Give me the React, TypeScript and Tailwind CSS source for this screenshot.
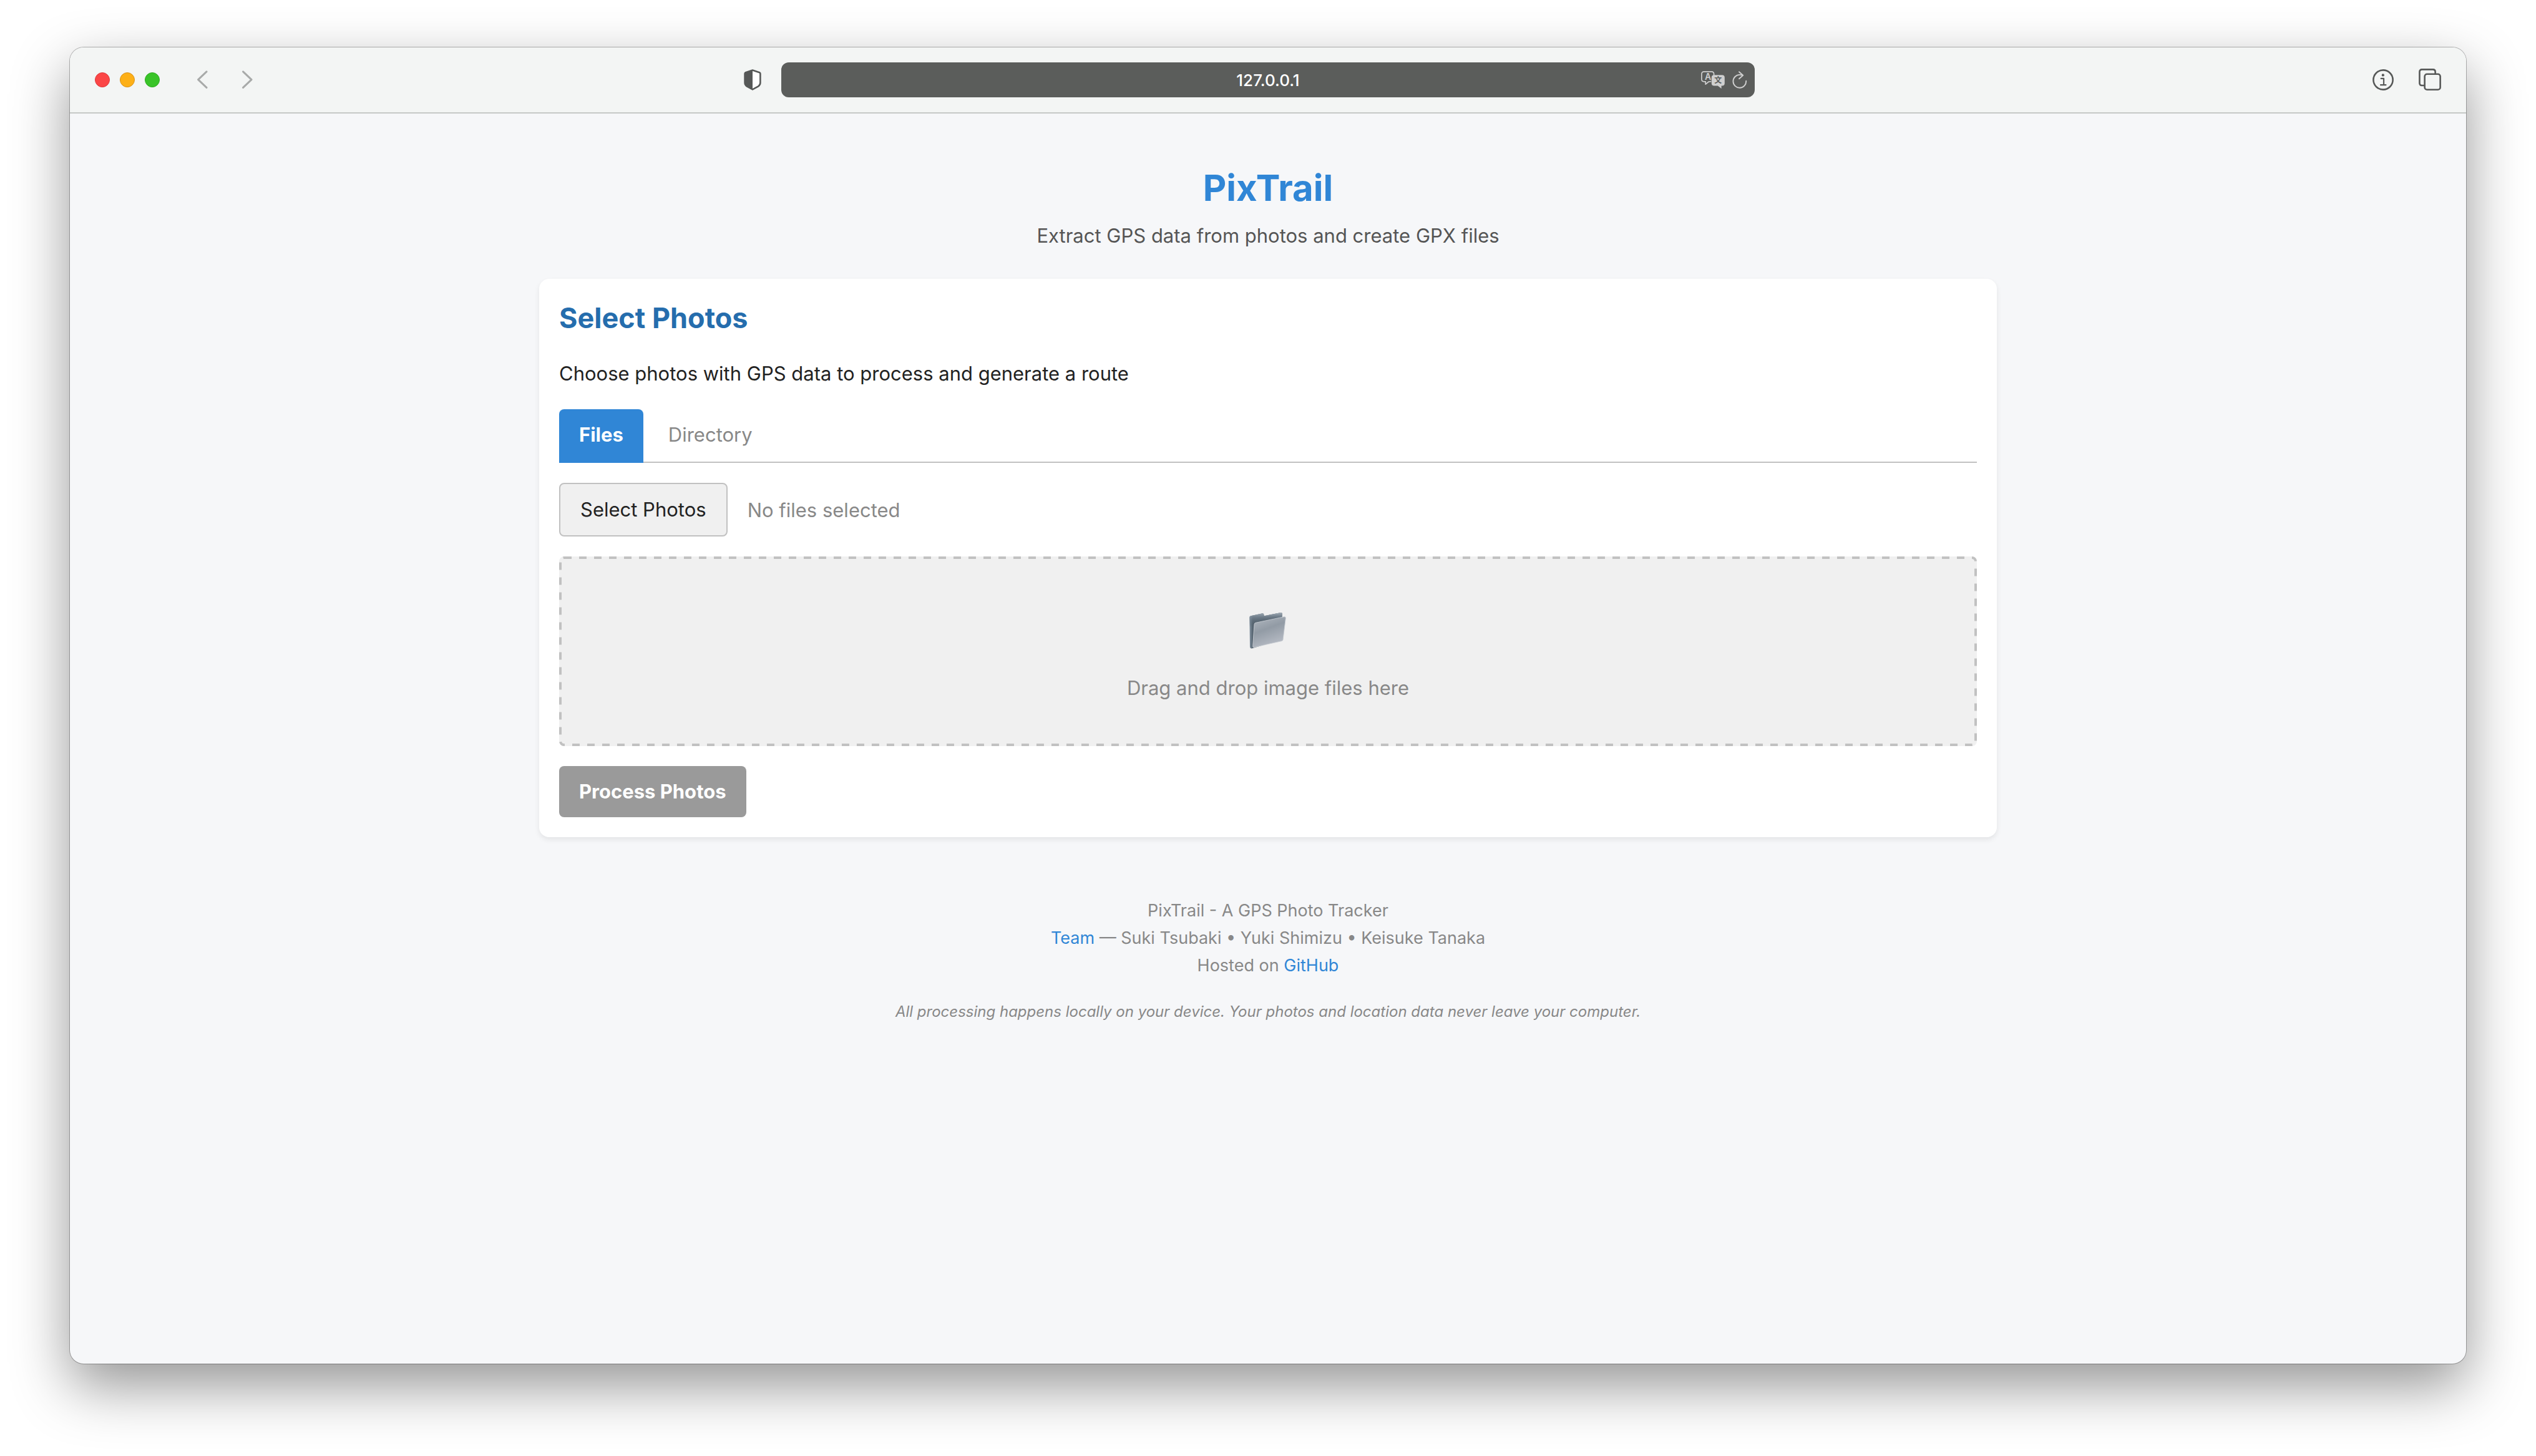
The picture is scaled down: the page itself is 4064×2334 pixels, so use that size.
import { useRef, useState } from 'react'

function ChevronIcon({ flip = false }: { flip?: boolean }) {
  return (
    <svg viewBox="0 0 18 30" className="h-[30px] w-[18px]" fill="none" stroke="#a8aaa9" strokeWidth="3" strokeLinecap="round" strokeLinejoin="round" aria-hidden="true">
      <path d={flip ? 'M2.6 1.8 16 14.6 2.6 27.4' : 'M16 1.8 2.6 14.6 16 27.4'} />
    </svg>
  )
}

function ShieldIcon() {
  return (
    <svg viewBox="0 0 28 34" className="h-[34px] w-7" aria-hidden="true">
      <path d="M14 1.6 25.2 5.3Q26.4 5.8 26.4 7v14.6Q26.4 25.2 23.2 27.3L14 32.4 4.8 27.3Q1.6 25.2 1.6 21.6V7Q1.6 5.8 2.8 5.3Z" fill="#fff" stroke="#565857" strokeWidth="2.6" strokeLinejoin="round" />
      <path d="M14 1.6V32.4L4.8 27.3Q1.6 25.2 1.6 21.6V7Q1.6 5.8 2.8 5.3Z" fill="#565857" />
    </svg>
  )
}

function TranslateIcon() {
  return (
    <svg viewBox="0 0 38 28" className="h-7 w-[38px]" aria-hidden="true">
      <path d="M15.5 16.6 12.2 17 7.2 21.2V16.8H5Q.9 16.8.9 12.8V4.8Q.9.9 5 .9H16.6Q20.6.9 20.6 4.8V6.4" fill="none" stroke="#cfcfcf" strokeWidth="1.7" strokeLinejoin="round" strokeLinecap="round" />
      <text x="11" y="13.8" fontSize="14" fontWeight="600" textAnchor="middle" fill="#cfcfcf" fontFamily="Inter, sans-serif">A</text>
      <path d="M21 6.2H33.6Q37.8 6.2 37.8 10.2V19.4Q37.8 23.4 33.6 23.4H32.6V28L26.8 23.4H21Q16.8 23.4 16.8 19.4V10.2Q16.8 6.2 21 6.2Z" fill="#cfcfcf" />
      <text x="27.3" y="19.2" fontSize="12" fontWeight="700" textAnchor="middle" fill="#5b5d5b" fontFamily="'Noto Sans CJK SC', sans-serif">文</text>
    </svg>
  )
}

function ReloadIcon() {
  return (
    <svg viewBox="0 0 24 28" className="h-7 w-6" fill="none" stroke="#cfcfcf" strokeWidth="1.9" strokeLinecap="round" strokeLinejoin="round" aria-hidden="true">
      <path d="M22.2 15.8A10.4 10.4 0 1 1 11.8 5.9Q14 5.9 16.4 6.6" />
      <path d="M11 1.2 17.2 6.8 11 12.2" />
    </svg>
  )
}

function InfoIcon() {
  return (
    <svg viewBox="0 0 34 34" className="size-[34px]" fill="none" stroke="#565857" aria-hidden="true">
      <circle cx="17" cy="17" r="15.6" strokeWidth="2.6" />
      <path d="M13.6 14.8H18V25.2M13 25.2H21.4" strokeWidth="2.2" strokeLinecap="round" strokeLinejoin="round" />
      <circle cx="16.8" cy="9.4" r="2.1" fill="#565857" stroke="none" />
    </svg>
  )
}

function TabsIcon() {
  return (
    <svg viewBox="0 0 36 36" className="size-9" fill="none" stroke="#565857" strokeWidth="2.6" aria-hidden="true">
      <path d="M9.6 27H5.2Q1.4 27 1.4 23.2V5.2Q1.4 1.4 5.2 1.4H22.8Q26.6 1.4 26.6 5.2V8.8" />
      <rect x="9.6" y="8.8" width="25" height="25" rx="3.8" />
    </svg>
  )
}

function FolderIcon() {
  return (
    <svg viewBox="180 117 186 186" className="size-[62px]" aria-hidden="true">
      <defs>
        <linearGradient id="folder-back" x1="0" y1="0" x2="1" y2="0">
          <stop offset="0" stopColor="#8594a2" />
          <stop offset="0.1" stopColor="#55636f" />
          <stop offset="1" stopColor="#3f4d59" />
        </linearGradient>
        <linearGradient id="folder-tab" x1="0" y1="0" x2="0" y2="1">
          <stop offset="0" stopColor="#a6b1bb" />
          <stop offset="0.14" stopColor="#7f8d9a" stopOpacity="0.6" />
          <stop offset="0.4" stopColor="#4b5965" stopOpacity="0" />
        </linearGradient>
        <linearGradient id="folder-front" x1="0.1" y1="0" x2="0.5" y2="1">
          <stop offset="0" stopColor="#b0b7bf" />
          <stop offset="0.45" stopColor="#929ba5" />
          <stop offset="1" stopColor="#b7bcc5" />
        </linearGradient>
      </defs>
      <path d="M184 146Q184 140 190 139L246 127Q252 126 253 132L254 139 335 123Q341 122 341 128V252L200 294Q188 299 186 288Z" fill="url(#folder-back)" />
      <path d="M184 146Q184 140 190 139L246 127Q252 126 253 132L254 139 335 123Q341 122 341 128V252L200 294Q188 299 186 288Z" fill="url(#folder-tab)" />
      <path d="M213 172 351 143Q359 142 358 150L345 254Q344 259 338 260L205 290Q199 291 200 284L207 179Q208 173 213 172Z" fill="url(#folder-front)" stroke="#c9ced4" strokeWidth="2.5" />
    </svg>
  )
}

function BrowserBar() {
  return (
    <header className="grid h-[106px] grid-cols-[1fr_minmax(0,1560px)_1fr] items-center gap-x-8 border-b-2 border-[#c6c8c7] bg-[#f3f5f4] px-10">
      <div className="flex items-center">
        <div className="flex gap-4">
          <button aria-label="Close" className="size-6 rounded-full border border-[#dc3a3c] bg-[#fb4646]" />
          <button aria-label="Minimize" className="size-6 rounded-full border border-[#d9921a] bg-[#fdb017]" />
          <button aria-label="Zoom" className="size-6 rounded-full border border-[#2fab22] bg-[#39c428]" />
        </div>
        <nav className="ml-12 flex gap-8">
          <button aria-label="Back" className="flex w-10 justify-center"><ChevronIcon /></button>
          <button aria-label="Forward" className="flex w-10 justify-center"><ChevronIcon flip /></button>
        </nav>
        <button aria-label="Privacy report" className="ml-auto"><ShieldIcon /></button>
      </div>
      <div className="grid h-14 grid-cols-[96px_1fr_96px] items-center rounded-xl bg-[#5b5d5b]">
        <input aria-label="Address" defaultValue="127.0.0.1" className="col-start-2 min-w-0 bg-transparent text-center text-[26px] font-medium text-white outline-none" />
        <div className="flex items-center justify-end gap-3 pr-3">
          <button aria-label="Translate"><TranslateIcon /></button>
          <button aria-label="Reload"><ReloadIcon /></button>
        </div>
      </div>
      <div className="flex items-center justify-end gap-10">
        <button aria-label="Page info"><InfoIcon /></button>
        <button aria-label="Show tabs"><TabsIcon /></button>
      </div>
    </header>
  )
}

const tabBase = 'rounded-t-lg px-8 leading-[50px] pt-4 pb-5 -mb-0.5'

function PhotoPicker() {
  const [tab, setTab] = useState<'Files' | 'Directory'>('Files')
  const fileInput = useRef<HTMLInputElement>(null)
  return (
    <section className="rounded-2xl bg-white p-8 shadow-[0_4px_8px_rgba(0,0,0,0.08)]">
      <h2 className="text-[45px] leading-[62px] font-bold text-[#256dad]">Select Photos</h2>
      <p className="mt-8 text-[#222]">Choose photos with GPS data to process and generate a route</p>
      <div role="tablist" className="mt-8 flex gap-2 border-b-2 border-[#c1c1c1]">
        {(['Files', 'Directory'] as const).map((name) => (
          <button
            key={name}
            role="tab"
            aria-selected={tab === name}
            onClick={() => setTab(name)}
            className={`${tabBase} ${tab === name ? 'bg-[#3086d6] font-bold text-white' : 'text-[#888]'}`}
          >
            {name}
          </button>
        ))}
      </div>
      <div className="mt-8 flex items-center gap-8">
        <button onClick={() => fileInput.current?.click()} className="rounded-lg border-2 border-[#c1c1c1] bg-[#f0f0f0] px-8 py-4 leading-[50px] text-[#222]">
          Select Photos
        </button>
        <input ref={fileInput} type="file" multiple accept="image/*" aria-label="Photos" className="hidden" />
        <span className="text-[#888]">No files selected</span>
      </div>
      <div className="relative mt-8 flex flex-col items-center overflow-hidden rounded-lg bg-[#f0f0f0] px-8 py-17 text-[#888]">
        <svg className="absolute inset-0 size-full" aria-hidden="true">
          <rect width="100%" height="100%" rx="8" fill="none" stroke="#c1c1c1" strokeWidth="8" strokeDasharray="12 12" />
        </svg>
        <div className="flex h-[101px] items-center"><FolderIcon /></div>
        <p className="mt-4">Drag and drop image files here</p>
      </div>
      <button disabled className="mt-8 rounded-lg bg-[#9a9a9a] px-8 py-4 leading-[50px] font-bold text-white">
        Process Photos
      </button>
    </section>
  )
}

export default function App() {
  return (
    <div className="flex min-h-screen flex-col bg-white px-28 pt-[76px] pb-37 font-['Inter','Noto_Sans',sans-serif] text-[31px] leading-[51px]">
      <div className="flex flex-1 flex-col overflow-hidden rounded-[22px] bg-[#f6f7f9] shadow-[0_0_0_1px_rgba(0,0,0,0.28),0_36px_92px_rgba(0,0,0,0.42)]">
        <BrowserBar />
        <main className="mx-auto w-full max-w-[2400px] px-8 pt-17">
          <div className="mb-11 text-center">
            <h1 className="text-[58px] leading-[102px] font-bold text-[#3086d6]">PixTrail</h1>
            <p className="text-[#555]">Extract GPS data from photos and create GPX files</p>
          </div>
          <PhotoPicker />
          <footer className="mt-24 text-center text-[27px] leading-11 text-[#888]">
            <p>PixTrail - A GPS Photo Tracker</p>
            <p>
              <a href="#team" className="text-[#3086d6]">Team</a> — Suki Tsubaki • Yuki Shimizu • Keisuke Tanaka
            </p>
            <p>
              Hosted on <a href="#github" className="text-[#3086d6]">GitHub</a>
            </p>
            <p className="mt-8 text-2xl leading-10 italic">
              All processing happens locally on your device. Your photos and location data never leave your computer.
            </p>
          </footer>
        </main>
      </div>
    </div>
  )
}
